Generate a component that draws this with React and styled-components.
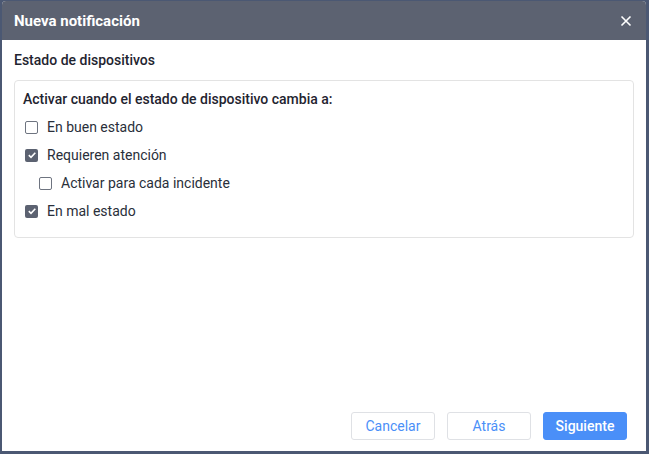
import React from "react";
import styled, { createGlobalStyle } from "styled-components";

const Global = createGlobalStyle`
  html, body { margin: 0; padding: 0; background: #4b5873; }
  body { font-family: Roboto, "Noto Sans", sans-serif; }
  #root { height: 454px; }
`;

const Frame = styled.div`
  height: 454px;
  box-sizing: border-box;
  padding: 1px 3px 3px 2px;
  display: flex;
`;

const Dialog = styled.div`
  flex: 1;
  background: #fff;
  border-radius: 4px 4px 0 0;
  display: flex;
  flex-direction: column;
  overflow: hidden;
`;

const Header = styled.div`
  height: 38px;
  background: #5c6271;
  display: flex;
  align-items: center;
  justify-content: space-between;
  padding: 1px 12px 0 12px;
  flex-shrink: 0;
`;

const Title = styled.h1`
  margin: 0;
  font-size: 15px;
  font-weight: 700;
  color: #fff;
`;

const Close = styled.button`
  border: 0;
  background: none;
  padding: 0;
  width: 16px;
  height: 16px;
  display: flex;
  align-items: center;
  justify-content: center;
  cursor: pointer;
`;

const Body = styled.div`
  flex: 1;
  padding: 11px 12px 0 12px;
  display: flex;
  flex-direction: column;
`;

const Section = styled.div`
  font-size: 14px;
  font-weight: 500;
  color: #1f2430;
  line-height: 18px;
  margin-bottom: 11px;
`;

const Box = styled.div`
  border: 1px solid #e3e3e3;
  border-radius: 4px;
  padding: 9px 9px 12px 8px;
  display: flex;
  flex-direction: column;
`;

const BoxTitle = styled.div`
  font-size: 14px;
  font-weight: 500;
  color: #1f2430;
  line-height: 18px;
  margin-bottom: 5px;
`;

const Row = styled.label`
  display: flex;
  align-items: center;
  height: 28px;
  padding-left: ${(p) => (p.$indent ? 16 : 2)}px;
  gap: 9px;
  font-size: 14px;
  color: #2a2f3a;
  cursor: pointer;
`;

const Box13 = styled.span`
  width: 13px;
  height: 13px;
  box-sizing: border-box;
  border-radius: 2px;
  border: ${(p) => (p.$on ? "none" : "1px solid #6e7480")};
  background: ${(p) => (p.$on ? "#5c6271" : "#fff")};
  display: flex;
  align-items: center;
  justify-content: center;
  flex-shrink: 0;
`;

const Footer = styled.div`
  display: flex;
  justify-content: flex-end;
  gap: 12px;
  padding: 0 19px 11px 0;
`;

const Btn = styled.button`
  width: 84px;
  height: 28px;
  border-radius: 3px;
  font-family: Roboto, sans-serif;
  font-size: 14px;
  cursor: pointer;
  border: 1px solid ${(p) => (p.$primary ? "#4a8ff8" : "#dfe1e5")};
  background: ${(p) => (p.$primary ? "#4a8ff8" : "#fff")};
  color: ${(p) => (p.$primary ? "#fff" : "#4a8ff8")};
  font-weight: ${(p) => (p.$primary ? 500 : 400)};
`;

const Check = ({ on }) => (
  <Box13 $on={on}>
    {on && (
      <svg width="10" height="10" viewBox="0 0 10 10">
        <path d="M1.8 5.2 L4 7.3 L8.3 2.8" fill="none" stroke="#fff" strokeWidth="1.6" />
      </svg>
    )}
  </Box13>
);

const items = [
  { label: "En buen estado", on: false },
  { label: "Requieren atención", on: true },
  { label: "Activar para cada incidente", on: false, indent: true },
  { label: "En mal estado", on: true },
];

export default function App() {
  return (
    <>
      <Global />
      <Frame>
        <Dialog>
          <Header>
            <Title>Nueva notificación</Title>
            <Close aria-label="Cerrar">
              <svg width="12" height="12" viewBox="0 0 12 12">
                <path d="M1.5 1.5 L10.5 10.5 M10.5 1.5 L1.5 10.5" stroke="#fff" strokeWidth="1.6" />
              </svg>
            </Close>
          </Header>
          <Body>
            <Section>Estado de dispositivos</Section>
            <Box>
              <BoxTitle>Activar cuando el estado de dispositivo cambia a:</BoxTitle>
              {items.map((it) => (
                <Row key={it.label} $indent={it.indent}>
                  <Check on={it.on} />
                  {it.label}
                </Row>
              ))}
            </Box>
          </Body>
          <Footer>
            <Btn>Cancelar</Btn>
            <Btn>Atrás</Btn>
            <Btn $primary>Siguiente</Btn>
          </Footer>
        </Dialog>
      </Frame>
    </>
  );
}
